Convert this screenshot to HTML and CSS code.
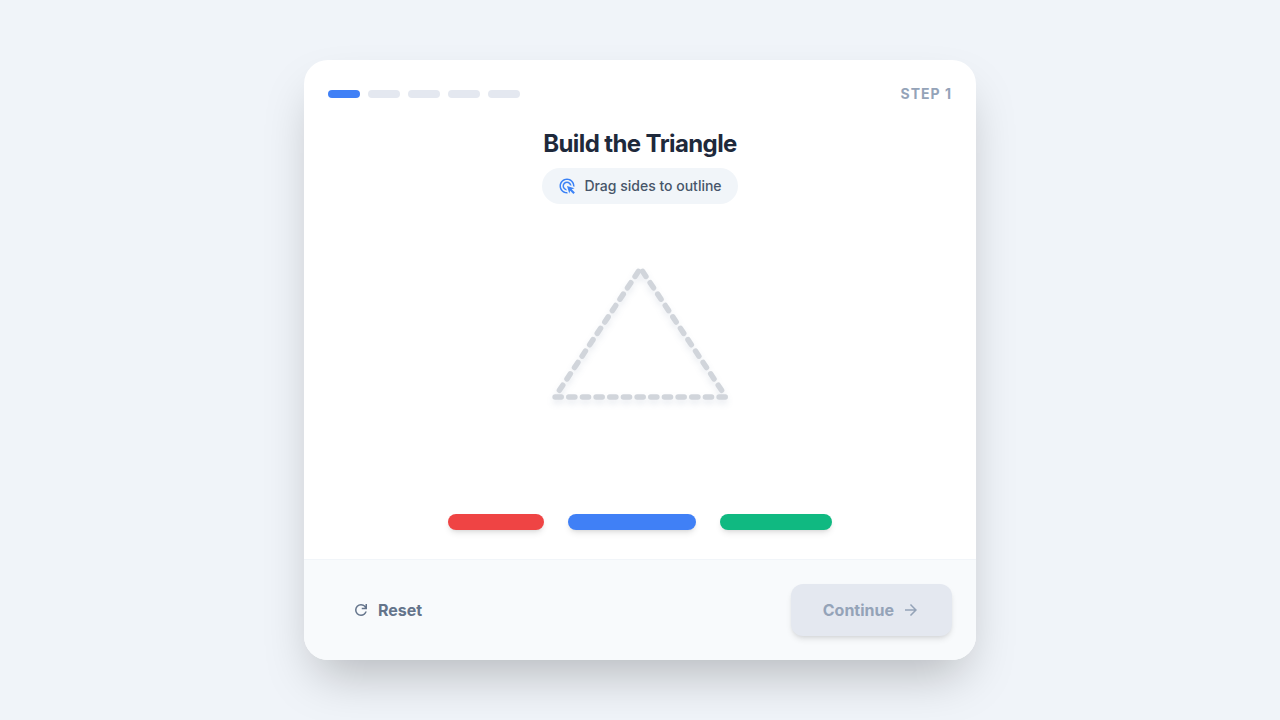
FILE: index.html
```html
<!DOCTYPE html>
<html lang="en">
<head>
    <meta charset="UTF-8">
    <meta name="viewport" content="width=device-width, initial-scale=1.0">
    <title>Build the Triangle</title>
    <link rel="stylesheet" href="styles.css">
</head>
<body>
    <div class="card">
        <header class="card-header">
            <div class="progress">
                <span class="progress-bar active"></span>
                <span class="progress-bar"></span>
                <span class="progress-bar"></span>
                <span class="progress-bar"></span>
                <span class="progress-bar"></span>
            </div>
            <span class="step-label">STEP 1</span>
        </header>

        <main class="stage">
            <h1 class="title">Build the Triangle</h1>
            <p class="hint">
                <svg class="icon hint-icon" viewBox="0 0 24 24" aria-hidden="true">
                    <path d="M11.71 17.99C8.53 17.84 6 15.22 6 12c0-3.31 2.69-6 6-6 3.22 0 5.84 2.53 5.99 5.71l-2.1-.63C15.48 9.31 13.89 8 12 8c-2.21 0-4 1.79-4 4 0 1.89 1.31 3.48 3.08 3.89l.63 2.1zM22 12c0 .3-.01.6-.04.9l-1.97-.59c.01-.1.01-.21.01-.31 0-4.42-3.58-8-8-8s-8 3.58-8 8 3.58 8 8 8c.1 0 .21 0 .31-.01l.59 1.97c-.3.03-.6.04-.9.04-5.52 0-10-4.48-10-10S6.48 2 12 2s10 4.48 10 10zm-3.77 4.26L22 15l-10-3 3 10 1.26-3.77 4.27 4.27 1.98-1.98-4.28-4.26z"/>
                </svg>
                Drag sides to outline
            </p>

            <div class="canvas">
                <svg class="triangle" viewBox="0 0 300 225" role="img" aria-label="Triangle outline">
                    <line class="side" x1="147" y1="21" x2="28" y2="200"/>
                    <line class="side" x1="153" y1="21" x2="272" y2="200"/>
                    <line class="side" x1="25" y1="205" x2="275" y2="205"/>
                </svg>
            </div>

            <div class="tray">
                <button class="stick stick-red" aria-label="Red side"></button>
                <button class="stick stick-blue" aria-label="Blue side"></button>
                <button class="stick stick-green" aria-label="Green side"></button>
            </div>
        </main>

        <footer class="card-footer">
            <button class="btn btn-reset">
                <svg class="icon" viewBox="0 0 24 24" aria-hidden="true">
                    <path d="M12 20q-3.35 0-5.675-2.325T4 12t2.325-5.675T12 4q1.725 0 3.3.713T18 6.75V4h2v7h-7V9h4.2q-.8-1.4-2.187-2.2T12 6Q9.5 6 7.75 7.75T6 12t1.75 4.25T12 18q1.925 0 3.475-1.1T17.65 14h2.1q-.7 2.65-2.85 4.325T12 20"/>
                </svg>
                Reset
            </button>
            <button class="btn btn-continue" disabled>
                Continue
                <svg class="icon" viewBox="0 0 24 24" aria-hidden="true">
                    <path d="M16.175 13H4v-2h12.175l-5.6-5.6L12 4l8 8-8 8-1.425-1.4z"/>
                </svg>
            </button>
        </footer>
    </div>
</body>
</html>
```
FILE: styles.css
```css
* {
    box-sizing: border-box;
}

body {
    display: flex;
    align-items: center;
    justify-content: center;
    min-height: 100vh;
    margin: 0;
    background-color: #f0f4f9;
    font-family: Inter, "Liberation Sans", sans-serif;
    font-optical-sizing: none;
    color: #1e293b;
}

button {
    border: none;
    padding: 0;
    font-family: inherit;
    cursor: pointer;
}

.card {
    display: flex;
    flex-direction: column;
    width: 100%;
    max-width: 672px;
    min-height: 600px;
    overflow: hidden;
    border-radius: 24px;
    background-color: #fff;
    box-shadow: 0 25px 50px -12px rgba(0, 0, 0, 0.25);
}

.card-header {
    display: flex;
    align-items: center;
    justify-content: space-between;
    padding: 24px;
}

.progress {
    display: flex;
    gap: 8px;
}

.progress-bar {
    width: 32px;
    height: 8px;
    border-radius: 4px;
    background-color: #e4e8f0;
}

.progress-bar.active {
    background-color: #4080f6;
}

.step-label {
    font-size: 14px;
    line-height: 20px;
    font-weight: 700;
    letter-spacing: 1px;
    color: #94a3b8;
}

.stage {
    display: flex;
    flex: 1;
    flex-direction: column;
    align-items: center;
}

.title {
    margin: 0 0 8px;
    font-size: 24px;
    line-height: 32px;
    font-weight: 700;
    letter-spacing: -0.025em;
}

.hint {
    display: flex;
    align-items: center;
    gap: 8px;
    margin: 0;
    padding: 8px 16px;
    border-radius: 18px;
    background-color: #f1f5f9;
    font-size: 14px;
    line-height: 20px;
    font-weight: 500;
    color: #475569;
}

.icon {
    width: 18px;
    height: 18px;
    fill: currentColor;
}

.hint-icon {
    color: #3b82f6;
}

.canvas {
    display: flex;
    flex: 1;
    align-items: center;
    padding-bottom: 50px;
}

.triangle {
    width: 205px;
    overflow: visible;
    filter: drop-shadow(0 4px 3px rgba(30, 60, 110, 0.1));
}

.side {
    stroke: #d1d5db;
    stroke-width: 8;
    stroke-linecap: round;
    stroke-dasharray: 9 11;
}

.tray {
    display: flex;
    gap: 24px;
    padding-bottom: 29px;
}

.stick {
    height: 16px;
    border-radius: 8px;
    box-shadow: 0 4px 6px -1px rgba(0, 0, 0, 0.1), 0 2px 4px -2px rgba(0, 0, 0, 0.1);
    cursor: grab;
}

.stick-red {
    width: 96px;
    background-color: #ef4444;
}

.stick-blue {
    width: 128px;
    background-color: #4080f6;
}

.stick-green {
    width: 112px;
    background-color: #10b981;
}

.card-footer {
    display: flex;
    align-items: center;
    justify-content: space-between;
    padding: 24px;
    border-top: 1px solid #f1f5f9;
    background-color: #f8fafc;
}

.btn {
    display: flex;
    align-items: center;
    gap: 8px;
    border-radius: 12px;
    font-size: 16px;
    line-height: 24px;
    font-weight: 700;
}

.btn-reset {
    padding: 14px 24px;
    background: none;
    color: #64748b;
}

.btn-continue {
    padding: 14px 32px;
    background-color: #e4e8f0;
    color: #94a3b8;
    box-shadow: 0 4px 6px -1px rgba(0, 0, 0, 0.1), 0 2px 4px -2px rgba(0, 0, 0, 0.1);
    cursor: not-allowed;
}
```
